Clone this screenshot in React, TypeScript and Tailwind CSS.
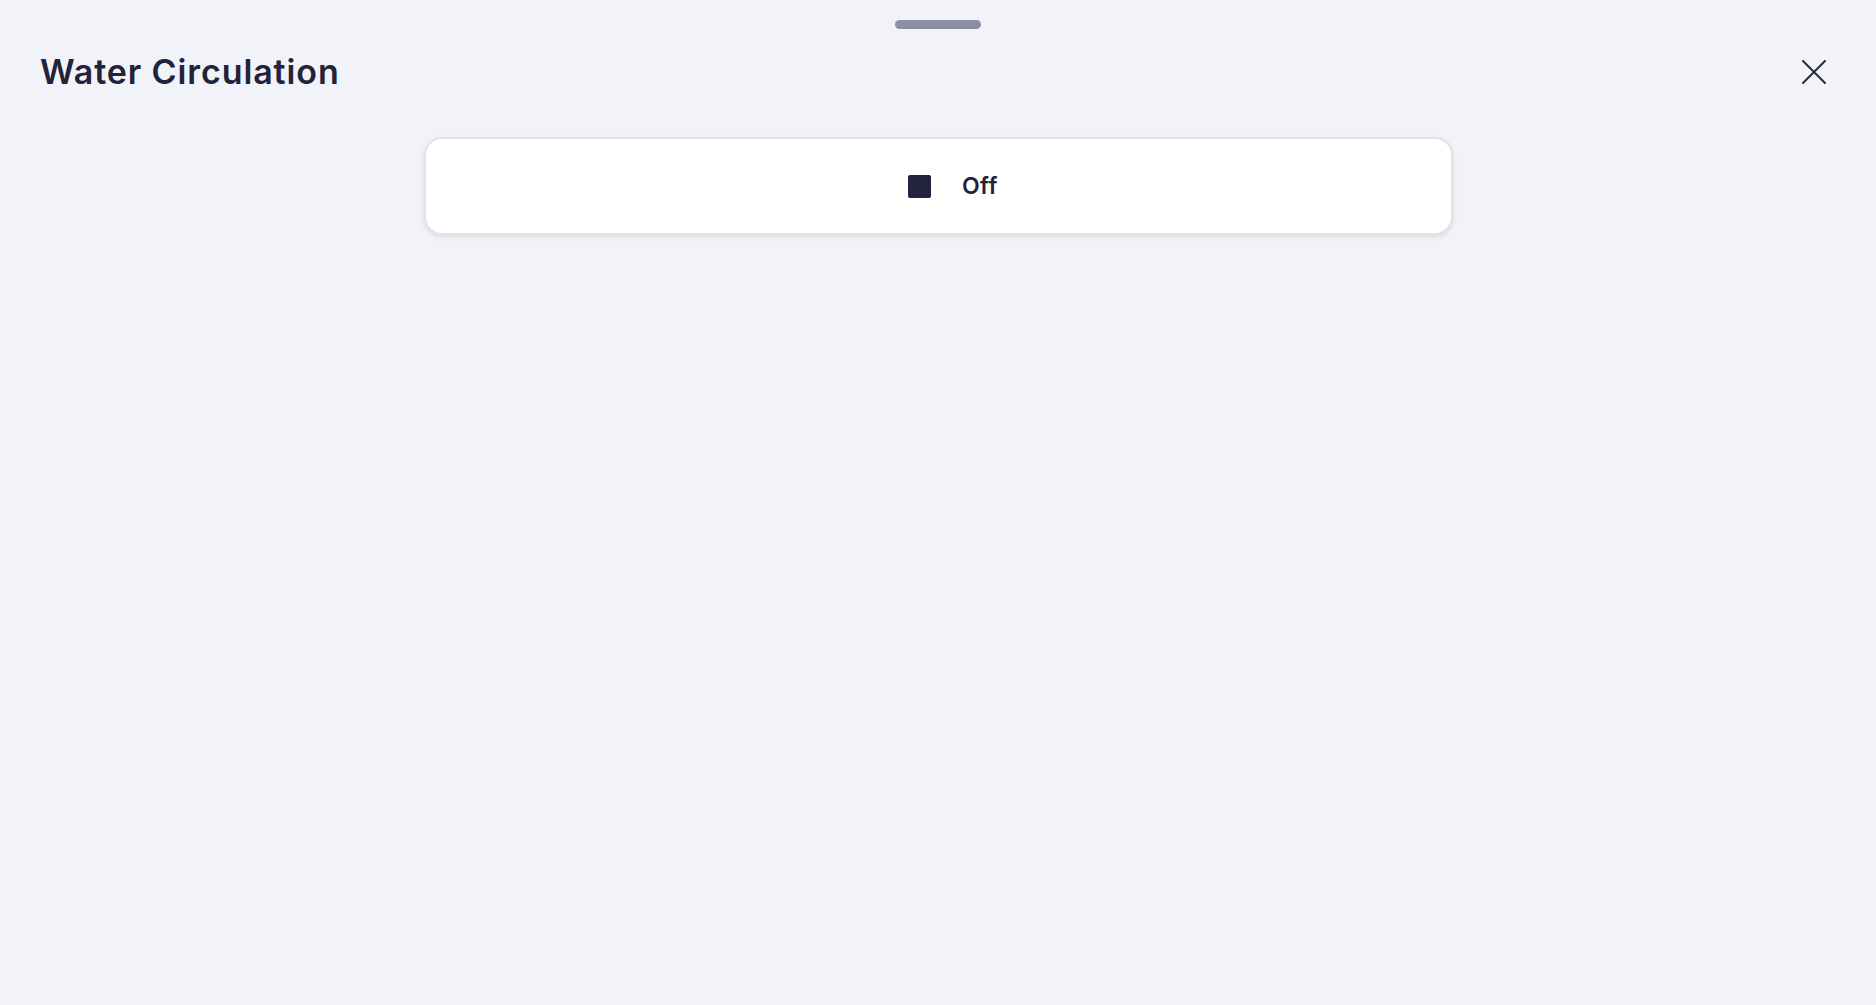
import React from "react";

export default function App() {
  return (
    <div
      className="w-full h-[1005px] bg-[#f2f3f8] flex flex-col"
      style={{ fontFamily: "Inter, 'Noto Sans', sans-serif" }}
    >
      <div className="flex justify-center pt-[20px]">
        <div className="w-[86px] h-[9px] rounded-full bg-[#8e8ea2]" />
      </div>
      <div className="flex items-center justify-between pl-[40px] pr-[50px] mt-[25px] h-[36px]">
        <h1 className="text-[34px] font-semibold text-[#22223b] tracking-[0.9px] leading-none">
          Water Circulation
        </h1>
        <button className="w-[24px] h-[24px] flex items-center justify-center text-[#2a2a40]">
          <svg width="24" height="24" viewBox="0 0 24 24" fill="none">
            <path d="M1 1L23 23M23 1L1 23" stroke="currentColor" strokeWidth="2" strokeLinecap="round" />
          </svg>
        </button>
      </div>
      <div className="flex justify-center mt-[47px]">
        <div className="w-[1029px] h-[98px] bg-white rounded-[18px] border-2 border-[#e2e3ea] shadow-[0_2px_5px_rgba(0,0,0,0.1)] flex items-center justify-center pl-[30px]">
          <div className="w-[23px] h-[23px] bg-[#23233f] rounded-[2px]" />
          <span className="ml-[31px] text-[23px] font-semibold tracking-[0.5px] text-[#22223b] leading-none">Off</span>
        </div>
      </div>
    </div>
  );
}
